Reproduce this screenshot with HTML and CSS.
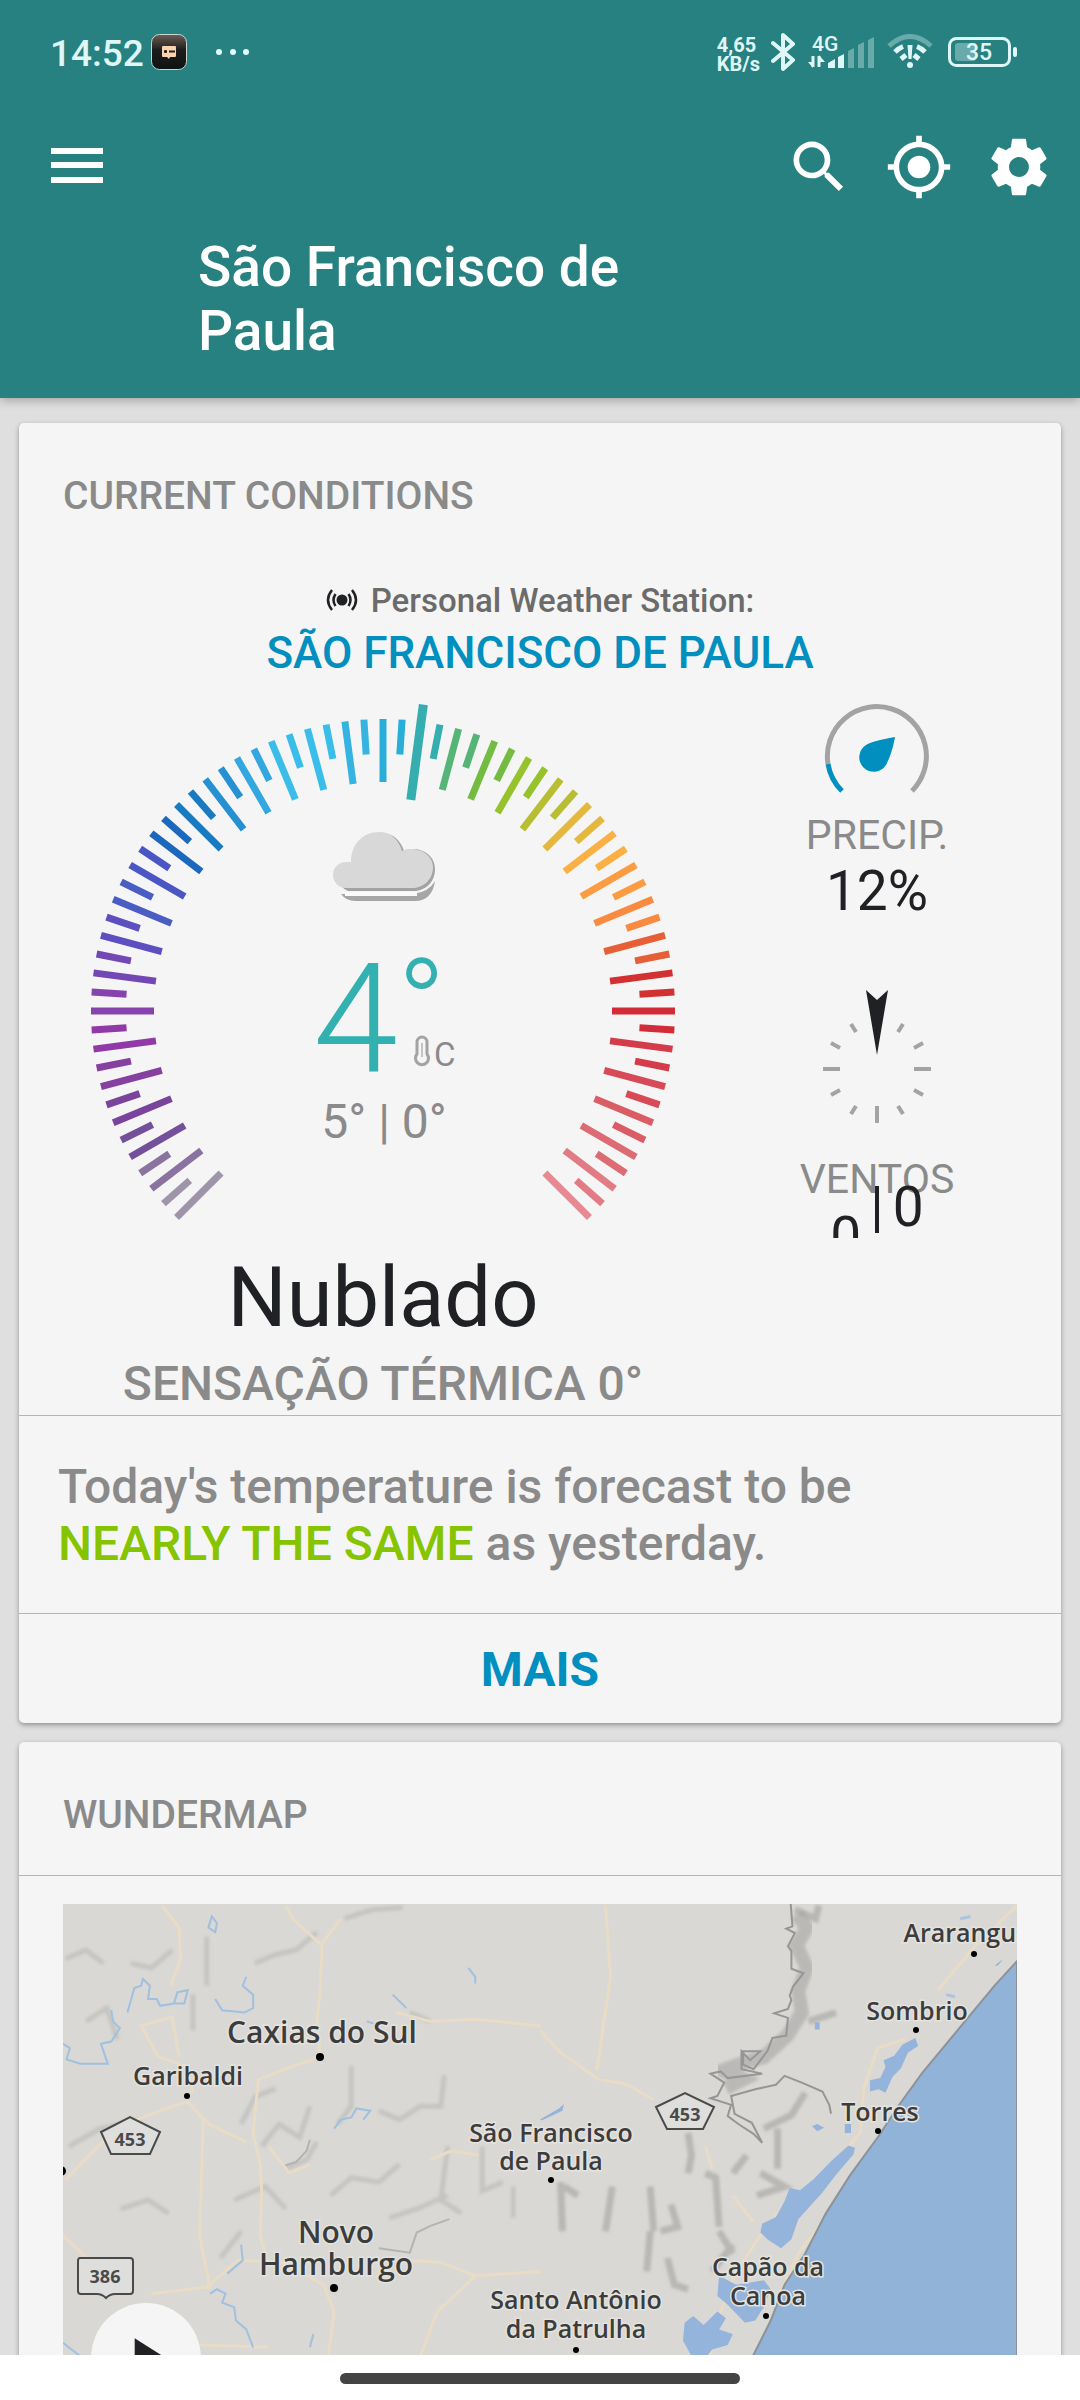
FILE: index.html
```
<!DOCTYPE html>
<html lang="pt-BR">
<head>
  <meta charset="UTF-8">
  <meta name="viewport" content="width=device-width, initial-scale=1">
  <title>São Francisco de Paula</title>
  <link rel="stylesheet" href="styles.css">
</head>
<body>

  <header class="app-bar">
    <!-- Status bar -->
    <div class="status">
      <div class="status-left">
        <span class="clock">14:52</span>
        <svg class="app-icon" width="36" height="36" viewBox="0 0 36 36">
          <defs>
            <linearGradient id="appBg" x1="0" y1="0" x2="0" y2="1">
              <stop offset="0" stop-color="#6d5d52"/>
              <stop offset="0.45" stop-color="#1c1c1b"/>
              <stop offset="1" stop-color="#0d1413"/>
            </linearGradient>
          </defs>
          <rect x="0.5" y="0.5" width="35" height="35" rx="8" fill="url(#appBg)" stroke="#c9d6d3"/>
          <path d="M12 12h12q1 0 1 1v9q0 1-1 1h-5l-1 2-2-2h-4q-1 0-1-1v-9q0-1 1-1z" fill="#f7d3b0"/>
          <path d="M13 17.500h3M14.500 16v3M18 17.500h6" stroke="#2a1c14" stroke-width="2"/>
        </svg>
        <svg width="34" height="10" viewBox="0 0 34 10" fill="#e4fbfb">
          <circle cx="4" cy="5" r="3"/><circle cx="18" cy="5" r="3"/><circle cx="31" cy="5" r="3"/>
        </svg>
      </div>
      <div class="status-right">
        <span class="speed">4,65<br>KB/s</span>
        <svg width="26" height="40" viewBox="0 0 26 40" fill="none" stroke="#e0f7f8" stroke-width="4" stroke-linejoin="round" stroke-linecap="round">
          <path d="M2 11l20 17-10 9V3l10 9L2 29"/>
        </svg>
        <svg class="signal" width="68" height="36" viewBox="0 0 68 36" fill="#e0f7f8">
          <text x="4" y="17" font-size="21" class="signal-text">4G</text>
          <path d="M5 22v11M11 33V22" stroke="#e0f7f8" stroke-width="3"/>
          <path d="M0 28h5v6zM11 21h0l6 7h-6z"/>
          <path d="M20 34v-5l7-4v9zM30 34V23l6-3v14z"/>
          <path d="M40 34V17l6-3v20zM50 34V11l6-3v26zM60 34V6l6-3v31z" opacity=".36"/>
        </svg>
        <svg width="46" height="36" viewBox="0 0 46 36" fill="none" stroke="#e0f7f8">
          <path d="M2 12Q23-7 44 12" stroke-width="5" opacity=".36"/>
          <path d="M8 18Q12 14 16 12.500M30 12.500Q34 14 38 18M14 25l5-4M32 25l-5-4" stroke-width="5"/>
          <path d="M20.500 11h5l-1 14h-3z" fill="#e0f7f8" stroke="none"/>
          <circle cx="23" cy="31" r="3" fill="#e0f7f8" stroke="none"/>
        </svg>
        <svg class="battery" width="70" height="32" viewBox="0 0 70 32">
          <rect x="7" y="7" width="21" height="18" rx="3" fill="#e0f7f8" opacity=".36"/>
          <rect x="1.500" y="2.500" width="60" height="27" rx="7" fill="none" stroke="#e0f7f8" stroke-width="3"/>
          <rect x="65" y="11" width="4" height="10" rx="2" fill="#e0f7f8"/>
          <text x="31" y="24" font-size="23" text-anchor="middle" class="signal-text" fill="#e0f7f8">35</text>
        </svg>
      </div>
    </div>

    <!-- Toolbar -->
    <div class="toolbar">
      <button class="icon-btn" aria-label="Menu">
        <svg width="68" height="68" viewBox="0 0 68 68" fill="#fff"><path d="M8 15h52v6H8zM8 29h52v6H8zM8 44h52v6H8z"/></svg>
      </button>
      <div class="actions">
        <button class="icon-btn" aria-label="Search">
          <svg width="68" height="68" viewBox="0 0 24 24" fill="#fff"><path d="M15.500 14h-.79l-.28-.27A6.471 6.471 0 0 0 16 9.500 6.500 6.500 0 1 0 9.500 16c1.610 0 3.090-.59 4.230-1.570l.27.28v.79l5 4.990L20.490 19l-4.990-5zm-6 0C7.010 14 5 11.990 5 9.500S7.010 5 9.500 5 14 7.010 14 9.500 11.990 14 9.500 14z"/></svg>
        </button>
        <button class="icon-btn" aria-label="My location">
          <svg width="68" height="68" viewBox="0 0 24 24" fill="#fff"><path d="M12 8c-2.210 0-4 1.790-4 4s1.790 4 4 4 4-1.790 4-4-1.790-4-4-4zm8.940 3A8.994 8.994 0 0 0 13 3.060V1h-2v2.060A8.994 8.994 0 0 0 3.060 11H1v2h2.060A8.994 8.994 0 0 0 11 20.940V23h2v-2.060A8.994 8.994 0 0 0 20.940 13H23v-2h-2.060zM12 19c-3.870 0-7-3.130-7-7s3.130-7 7-7 7 3.130 7 7-3.130 7-7 7z"/></svg>
        </button>
        <button class="icon-btn" aria-label="Settings">
          <svg width="68" height="68" viewBox="0 0 24 24" fill="#fff"><path d="M19.430 12.980c.04-.32.07-.64.07-.98s-.03-.66-.07-.98l2.110-1.650c.19-.15.24-.42.12-.64l-2-3.460c-.12-.22-.39-.3-.61-.22l-2.490 1c-.52-.4-1.080-.73-1.690-.98l-.38-2.650A.488.488 0 0 0 14 2h-4c-.25 0-.46.18-.49.42l-.38 2.650c-.61.25-1.170.59-1.690.98l-2.490-1c-.23-.09-.49 0-.61.22l-2 3.460c-.13.22-.07.49.12.64l2.110 1.650c-.04.32-.07.65-.07.98s.03.66.07.98l-2.110 1.650c-.19.15-.24.42-.12.64l2 3.460c.12.22.39.3.61.22l2.490-1c.52.4 1.080.73 1.690.98l.38 2.650c.03.24.24.42.49.42h4c.25 0 .46-.18.49-.42l.38-2.650c.61-.25 1.170-.59 1.690-.98l2.490 1c.23.09.49 0 .61-.22l2-3.460c.12-.22.07-.49-.12-.64l-2.110-1.650zM12 15.500c-1.930 0-3.500-1.570-3.500-3.500s1.570-3.500 3.500-3.500 3.500 1.570 3.500 3.500-1.570 3.500-3.500 3.500z"/></svg>
        </button>
      </div>
    </div>
    <h1>São Francisco de Paula</h1>
  </header>

  <main>
    <!-- Current conditions -->
    <section class="card">
      <h2>CURRENT CONDITIONS</h2>

      <div class="station">
        <p class="station-label">
          <svg width="32" height="24" viewBox="0 0 32 24" fill="none" stroke="#202124" stroke-width="2.5">
            <circle cx="16" cy="11" r="5.500" fill="#202124" stroke="none"/>
            <path d="M9.500 5q-4 6 0 12M22.500 5q4 6 0 12M6 1q-8 10 0 20M26 1q8 10 0 20"/>
          </svg>
          Personal Weather Station:
        </p>
        <a class="station-name" href="#">SÃO FRANCISCO DE PAULA</a>
      </div>

      <div class="conditions">
        <div class="temperature">
          <svg class="gauge" viewBox="-312 -312 624 540">
            <g id="ticks"></g>
            <!-- cloud -->
            <path d="M-42-117H30Q46-119 52-130Q49-110 32-110H-28Q-37-110-42-117z" fill="#a6a6a6"/>
            <path d="M-38-117H34" stroke="#fafafa" stroke-width="4"/>
            <path d="M-35-120A14 14 0 0 1-36-146H-30C-30-164-18-178-1-178C10-178 18-170 21-160C34-166 52-158 52-142C52-128 42-120 30-120z" fill="#a3a3a3"/>
            <path d="M-37-123A13 13 0 0 1-37-149H-32C-32-167-20-179-4-179C8-179 16-171 19-160C32-166 50-158 50-144C50-131 40-123 29-123z" fill="#d8d8d8"/>
            <text class="temp" x="-70" y="60">4</text>
            <text class="temp-degree" x="14" y="40">°</text>
            <path d="M34 43v-12a5 5 0 0 1 10 0v12a6.500 6.500 0 1 1-10 0z" fill="#f5f5f5" stroke="#a3a3a3" stroke-width="3"/>
            <path d="M39 32v14" stroke="#c4c4c4" stroke-width="2"/>
            <text class="unit" x="51" y="55">C</text>
            <text class="hi-lo" x="1" y="127">5° | 0°</text>
          </svg>
          <p class="sky">Nublado</p>
          <p class="feels">SENSAÇÃO TÉRMICA 0°</p>
        </div>

        <div class="extras">
          <svg width="120" height="100" viewBox="-60 -57 120 100" fill="none" stroke-width="5">
            <path d="M-49 8A49.500 49.500 0 1 1 35 35" stroke="#a3a3a3"/>
            <path d="M-35 35A49.500 49.500 0 0 1-49 8" stroke="#008fbf"/>
            <path d="M18-19Q15-2 9 9A14.500 14.500 0 1 1-11-11Q-5-15 18-19z" fill="#008fbf"/>
          </svg>
          <p class="label">PRECIP.</p>
          <p class="value">12%</p>

          <svg class="compass" width="120" height="144" viewBox="-60 -84 120 144">
            <path d="M-54 0h17M37 0h17M0 37v17M-26-45l5 8M26-45l-5 8M-26 45l5-8M26 45l-5-8M-46-26l9 5M46-26l-9 5M-46 26l9-5M46 26l-9-5" stroke="#a3a3a3" stroke-width="4"/>
            <path d="M-11-79L0-69 11-79 0-14z" fill="#202124"/>
          </svg>
          <p class="label">VENTOS</p>
          <p class="value wind"><span class="speed-low">0</span><span>|</span><span>0</span></p>
        </div>
      </div>

      <p class="forecast">Today's temperature is forecast to be <b>NEARLY THE SAME</b> as yesterday.</p>
      <button class="more">MAIS</button>
    </section>

    <!-- WunderMap -->
    <section class="card">
      <h2>WUNDERMAP</h2>
      <div class="map">
        <svg viewBox="0 0 954 600">
          <defs>
            <filter id="soften" x="-5%" y="-5%" width="110%" height="110%">
              <feGaussianBlur stdDeviation="5 4"/>
            </filter>
          </defs>
          <rect width="954" height="600" fill="#d9d8d4"/>
          <g class="art" transform="translate(-63 -204) scale(.3444 .4464)">
            <g class="relief soft" filter="url(#soften)">
              <path d="M200 1000l90-40 120-20M190 580l60-20 50 30M350 1140l80-20 60 30M760 1000l50-50 60 30 30-70M830 1050l60-20 30-40M700 950l40-60 60-20M1020 820v90l-40 40M1100 920l60 20 60-30h60l10-70M960 1110l60-40 80 10 60-40M1130 1160l80-20 90-30M1400 1000v100l60-20M1490 1090v70M250 720l60-30 30 70M560 740v-80M600 640v-110M740 590l60-20 60-10 60-40M1000 490l80-20 90-5M1300 1000l-20 120 60 30M500 560l-60 40-60-10M640 1250l60-60M1250 720l-60-20M680 1120l90-30 60 50"/>
            </g>
            <g class="relief"><path d="M1100 1228l90 10 20-45 40-15 55-15"/><path d="M820 1045l40-10 30-25 10-25"/></g>
            <g class="road">
              <path d="M470 460l50 50 5 70-30 60M830 460l20 30 85 60-5 100-10 70 10 80-80 20-100 30-15 120 20 70 5 60-5 100 20 50M545 900l60 50 110 40M545 900l-80 20-100 30-80 50-95 75M1150 700l100 20 130-5 190 15M440 1330l160-15 90-60 130 5 120 50 30 60-20 120M1180 1255l100 5 100 30 190-10M183 1200l70 50M520 800l-20-90-90 20 50 70 80 20 20 60M590 940l-10 260 30 120M780 1000l60 60 60-20M1250 1030l60-20 80 10M580 1445l200 5M930 550l60-60M1220 1470l50-100 110-80"/>
            </g>
            <g class="river">
              <path d="M183 770l20 10-10 25 40 10 80 0-20-45 30-5 25-30-20-15-5-25M370 700l20-55 20-5 5-15 20 15-5 30 25 0 10 15 40-5 30 0 10-30-30 5-10 25M625 670l20 25 65 5 25-10v-30l-30-20 10-20M605 510l10-25 15 15-5 20zM700 1220l5 35-45 30M610 1330l20-10 25 10-10 20 35 10 5 30 30 20 20 40M970 960l20-20 30-5 15-20 40 5-20 20M1360 600l20 20v15M1140 660l40 30M1065 720l20 5M183 1440l50 30M910 1420l-10 30"/>
            </g>
          </g>
          <g class="art" transform="translate(477 -204) scale(.3444 .4464)">
            <g class="relief soft valleys" filter="url(#soften)">
              <path d="M60 1080l5 110M70 1090l40 20M210 1090l-20 100M320 1090l10 100M320 1190l-10 90M380 1130l20 50-50 10M430 970l10 50-10 40M480 1060l30 10 10 110M600 1020l-40 40M690 960v90M520 1190l40 50M370 1250l20 60 40 10M500 1280l60-60M780 720l80-20M740 470l60 20 10-30M640 1060l70 30-80 20M650 960l80-30 40-50"/>
            </g>
            <g class="relief steep">
              <path class="scarp" filter="url(#soften)" d="M745 480l30 30-30 40 30 50-25 50 10 50-40 50-70 50-50 10-70 20 60 20-50 20"/>
              <path d="M728 457l5 50-18 5 25 10-20 30 10 10v40l35 10-30 30-10 20 5 10-10 20-40 10 40 10-5 40-40 5-15 30-40 40-30-10v-30h50l-30 20-25-20v40l60 10-100 10-20-15-30 5 40 20-20 30-20 5 60 15-10 25 35 20 40 20 25 20-30-45-50-20-10-40 70-15 60-10 25-20 50 15 60 20 20 30 5 20"/>
            </g>
            <g class="road">
              <path d="M190 460l15 160-40 210M0 740l60 50 110 60 80 10 80 35M1385 460l-120 90-110 100M1060 760l-80 20-40 90-10 100-130 110-100 60-60 60-70 80-50 100-30 100M560 1110l60 60M480 1000l20 50M980 1000l-120 130-110 110-60 100"/>
            </g>
            <path d="M1385 585L1320 640 1250 705 1110 835 1040 910 985 975 900 1065 830 1150 770 1240 710 1310 670 1390 618 1470 530 1600H1385z" fill="#92b3d8" stroke="#8d9299" stroke-width="2"/>
            <path d="M1090 757l8 18-30 15-20 35-25 20-20 35-20-8-25 5v-25l30-5 15-25-5-15 30-10 25-25zM915 1003l-5 15-50 45-40 40-70 60-20 45-30 20-40-20-20-15 5-20 40-15 25-35 15-30 30 5 40-25 50-40 50-35zM520 1290l50 20 80-10 20 20-20 40-25 30-30 5-50-40-30-20zM420 1395l25-15 30 20 40-30 25 15-20 25 40 10-15 25-45 10-20 20-40-5-25-35zM885 950h18v20h-18zM790 955l15-5 20 8-20 8zM0 940l55-25 15-10-5 15-60 22zM798 722h14v16h-14zM1320 595l25-15-15 15z" fill="#94b4dc"/>
            <path d="M1220 490l30-5M1180 660l25 5" stroke="#a9c5e2" stroke-width="3" fill="none"/>
          </g>

          <g class="shield">
            <path d="M38 228L67 213 97 228 87 250H48z"/>
            <path d="M593 203L622 189 651 203 640 225H604z"/>
            <path d="M17 354h50q3 0 3 3v30q0 3-3 3H52q-5 0-9 4-4-4-9-4H18q-3 0-3-3v-30q0-3 2-3z"/>
            <text x="67" y="242">453</text>
            <text x="622" y="217">453</text>
            <text x="42" y="379">386</text>
          </g>
          <g class="dots">
            <circle cx="257" cy="153" r="4"/><circle cx="124" cy="192" r="3"/><circle cx="488" cy="276" r="3"/>
            <circle cx="271" cy="384" r="4"/><circle cx="513" cy="446" r="3"/><circle cx="911" cy="50" r="3"/>
            <circle cx="853" cy="126" r="3"/><circle cx="815" cy="227" r="3"/><circle cx="703" cy="412" r="3"/>
            <circle cx="-2" cy="267" r="5"/>
          </g>
          <g class="places">
            <text class="city" x="259" y="139">Caxias do Sul</text>
            <text x="125" y="181">Garibaldi</text>
            <text x="488" y="238">São Francisco</text>
            <text x="488" y="266">de Paula</text>
            <text class="city" x="273" y="339">Novo</text>
            <text class="city" x="273" y="371">Hamburgo</text>
            <text x="513" y="405">Santo Antônio</text>
            <text x="513" y="434">da Patrulha</text>
            <text x="904" y="38">Araranguá</text>
            <text x="854" y="116">Sombrio</text>
            <text x="817" y="217">Torres</text>
            <text x="705" y="372">Capão da</text>
            <text x="705" y="401">Canoa</text>
          </g>
        </svg>
        <button class="play" aria-label="Play">
          <svg width="68" height="68" viewBox="0 0 24 24" fill="#202124"><path d="M8 5v14l11-7z"/></svg>
        </button>
      </div>
    </section>
  </main>

  <footer class="nav"><span class="handle"></span></footer>

  <script>
    // one colour per 7.5 degrees, from -135 to 135
    const colors = [
      "#9f95ab", "#8a72a1", "#75509a", "#7a449c", "#8540a0", "#9139a6", "#8743ad",
      "#7348b5", "#5d4fc0", "#4a5dc2", "#4a56c4", "#1b68bd", "#187ac0", "#2590d2",
      "#33a7e0", "#3bbdea", "#3bbdea", "#35b4e2", "#29aeda", "#36aeb0", "#55b476",
      "#74bb41", "#96c22c", "#b8be34", "#e3b83c", "#fbb046", "#fb9c42", "#fa8a40",
      "#e65f37", "#d33131", "#d22c38", "#d33c48", "#d74b56", "#da5c65", "#dd6b73",
      "#e27c84", "#e68a92"
    ];
    const current = 19;
    const ticks = document.getElementById("ticks");

    function addTick(angle, from, to, width, color) {
      const line = document.createElementNS("http://www.w3.org/2000/svg", "line");
      line.setAttribute("y1", -from);
      line.setAttribute("y2", -to);
      line.setAttribute("stroke", color);
      line.setAttribute("stroke-width", width);
      line.setAttribute("transform", `rotate(${angle})`);
      ticks.appendChild(line);
    }

    colors.forEach((color, i) => {
      const angle = -135 + i * 7.5;
      if (i === current) {
        addTick(angle, 213, 309, 9, color);
      } else {
        addTick(angle, 229, 292, 7, color);
      }
      if (i < colors.length - 1) {
        addTick(angle + 3.75, 257, 292, 7, color);
      }
    });
  </script>

</body>
</html>
```

FILE: styles.css
```
* {
  box-sizing: border-box;
}

body {
  margin: 0;
  height: 100vh;
  display: flex;
  flex-direction: column;
  background: #dfdfdf;
  font-family: Roboto, "Liberation Sans", sans-serif;
  color: #202124;
  overflow: hidden;
}

h1, h2, p {
  margin: 0;
}

svg {
  display: block;
}

button {
  font-family: inherit;
  border: none;
  background: none;
  padding: 0;
  cursor: pointer;
}

/* Header */
.app-bar {
  position: relative;
  background: #268180;
  color: white;
  padding-bottom: 35px;
  box-shadow: 0 2px 10px rgba(0, 0, 0, 0.3);
}

.status {
  display: flex;
  justify-content: space-between;
  align-items: center;
  height: 104px;
  padding: 0 62px 0 50px;
  color: #e0f7f8;
}

.status-left, .status-right {
  display: flex;
  align-items: center;
}

.clock {
  font-size: 37px;
  line-height: 40px;
  font-weight: 500;
  margin-top: 4px;
}

.app-icon {
  margin: 0 28px 0 7px;
}

.status-right {
  gap: 11px;
}

.battery {
  margin-left: 4px;
}

.speed {
  font-size: 20px;
  line-height: 19px;
  font-weight: 700;
  padding-top: 6px;
}

.signal-text {
  font-weight: 500;
}

.toolbar {
  display: flex;
  justify-content: space-between;
  padding: 29px 27px 0 43px;
}

.actions {
  display: flex;
  gap: 32px;
}

h1 {
  margin: 34px 0 0 198px;
  max-width: 500px;
  font-size: 55px;
  line-height: 64px;
  font-weight: 500;
}

/* Cards */
main {
  flex: 1;
  min-height: 0;
  overflow: hidden;
  padding: 25px 19px 0;
}

.card {
  background: #f5f5f5;
  border-radius: 5px;
  box-shadow: 0 2px 5px rgba(0, 0, 0, 0.35);
  margin-bottom: 19px;
}

.card h2 {
  padding: 49px 44px 36px;
  font-size: 39px;
  line-height: 48px;
  font-weight: 500;
  color: #8a8a8a;
}

.station {
  padding-top: 23px;
  text-align: center;
}

.station-label {
  display: flex;
  justify-content: center;
  align-items: center;
  gap: 13px;
  font-size: 33px;
  line-height: 44px;
  font-weight: 500;
  color: #6b6b6b;
  margin-bottom: 4px;
}

.station-name {
  display: block;
  font-size: 44px;
  line-height: 52px;
  font-weight: 500;
  color: #008fbf;
  text-decoration: none;
}

.conditions {
  display: grid;
  grid-template-columns: 14fr 5fr;
  padding: 20px 54px 3px 0;
}

.temperature, .extras {
  display: flex;
  flex-direction: column;
  align-items: center;
}

.gauge {
  width: 100%;
  max-width: 624px;
}

.temp {
  font-size: 153px;
  font-weight: 300;
  fill: #33b0b0;
}

.temp-degree {
  font-size: 130px;
  font-weight: 300;
  fill: #33b0b0;
}

.unit {
  font-size: 33px;
  fill: #8a8a8a;
}

.hi-lo {
  font-size: 48px;
  fill: #8a8a8a;
  text-anchor: middle;
}

.sky {
  margin-top: 11px;
  font-size: 83px;
  line-height: 96px;
}

.feels {
  margin-top: 10px;
  font-size: 48px;
  line-height: 56px;
  font-weight: 500;
  color: #8a8a8a;
}

.label {
  margin-top: 12px;
  font-size: 41px;
  line-height: 48px;
  color: #8a8a8a;
}

.value {
  font-size: 55px;
  line-height: 64px;
}

.compass {
  margin: 62px 0 14px;
}

/* the wind reading runs over its label and is cut at the bottom */
.wind {
  display: flex;
  gap: 9px;
  height: 63px;
  margin-top: -28px;
  overflow: hidden;
}

.speed-low {
  padding-top: 30px;
}

.forecast {
  border-top: 1px solid #b5b5b5;
  border-bottom: 1px solid #b5b5b5;
  padding: 42px 180px 41px 39px;
  font-size: 48px;
  line-height: 57px;
  font-weight: 500;
  color: #8a8a8a;
}

.forecast b {
  font-weight: 500;
  color: #86c400;
}

.more {
  display: block;
  width: 100%;
  padding: 28px 0 25px;
  font-size: 48px;
  line-height: 56px;
  font-weight: 700;
  color: #008fbf;
}

/* Map */
.map {
  position: relative;
  border-top: 1px solid #b5b5b5;
  padding: 28px 44px 44px;
}

.art path {
  vector-effect: non-scaling-stroke;
}

.relief path {
  fill: none;
  stroke: #b4b4b2;
  stroke-width: 2;
}

.relief.soft path {
  stroke: #b8b8b6;
  stroke-width: 5;
  opacity: 0.6;
}

.relief.valleys path {
  stroke: #a2a2a0;
  stroke-width: 7;
}

.relief.steep path {
  stroke: #969696;
}

.relief.steep .scarp {
  stroke: #a6a6a4;
  stroke-width: 14;
  opacity: 0.6;
}

.road path {
  fill: none;
  stroke: #e8dcc6;
  stroke-width: 3;
}

.river path {
  fill: none;
  stroke: #9fc0e0;
  stroke-width: 2;
}

.shield path {
  fill: #dededc;
  stroke: #4a4a4a;
  stroke-width: 2;
}

.shield text {
  font: 700 18px "Open Sans", sans-serif;
  fill: #4a4a4a;
  text-anchor: middle;
}

.places text {
  font: 600 25px "Open Sans", sans-serif;
  fill: #3c3c3c;
  stroke: #e4e3df;
  stroke-width: 3;
  paint-order: stroke;
  text-anchor: middle;
}

.places .city {
  font-size: 30px;
}

.play {
  position: absolute;
  left: 72px;
  top: 427px;
  width: 110px;
  height: 110px;
  border-radius: 50%;
  background: #f5f5f5;
  display: flex;
  align-items: center;
  justify-content: center;
}

/* Gesture bar */
.nav {
  display: flex;
  justify-content: center;
  background: white;
  padding: 18px 0 16px;
}

.handle {
  width: 37%;
  height: 11px;
  border-radius: 6px;
  background: #444;
}
```
